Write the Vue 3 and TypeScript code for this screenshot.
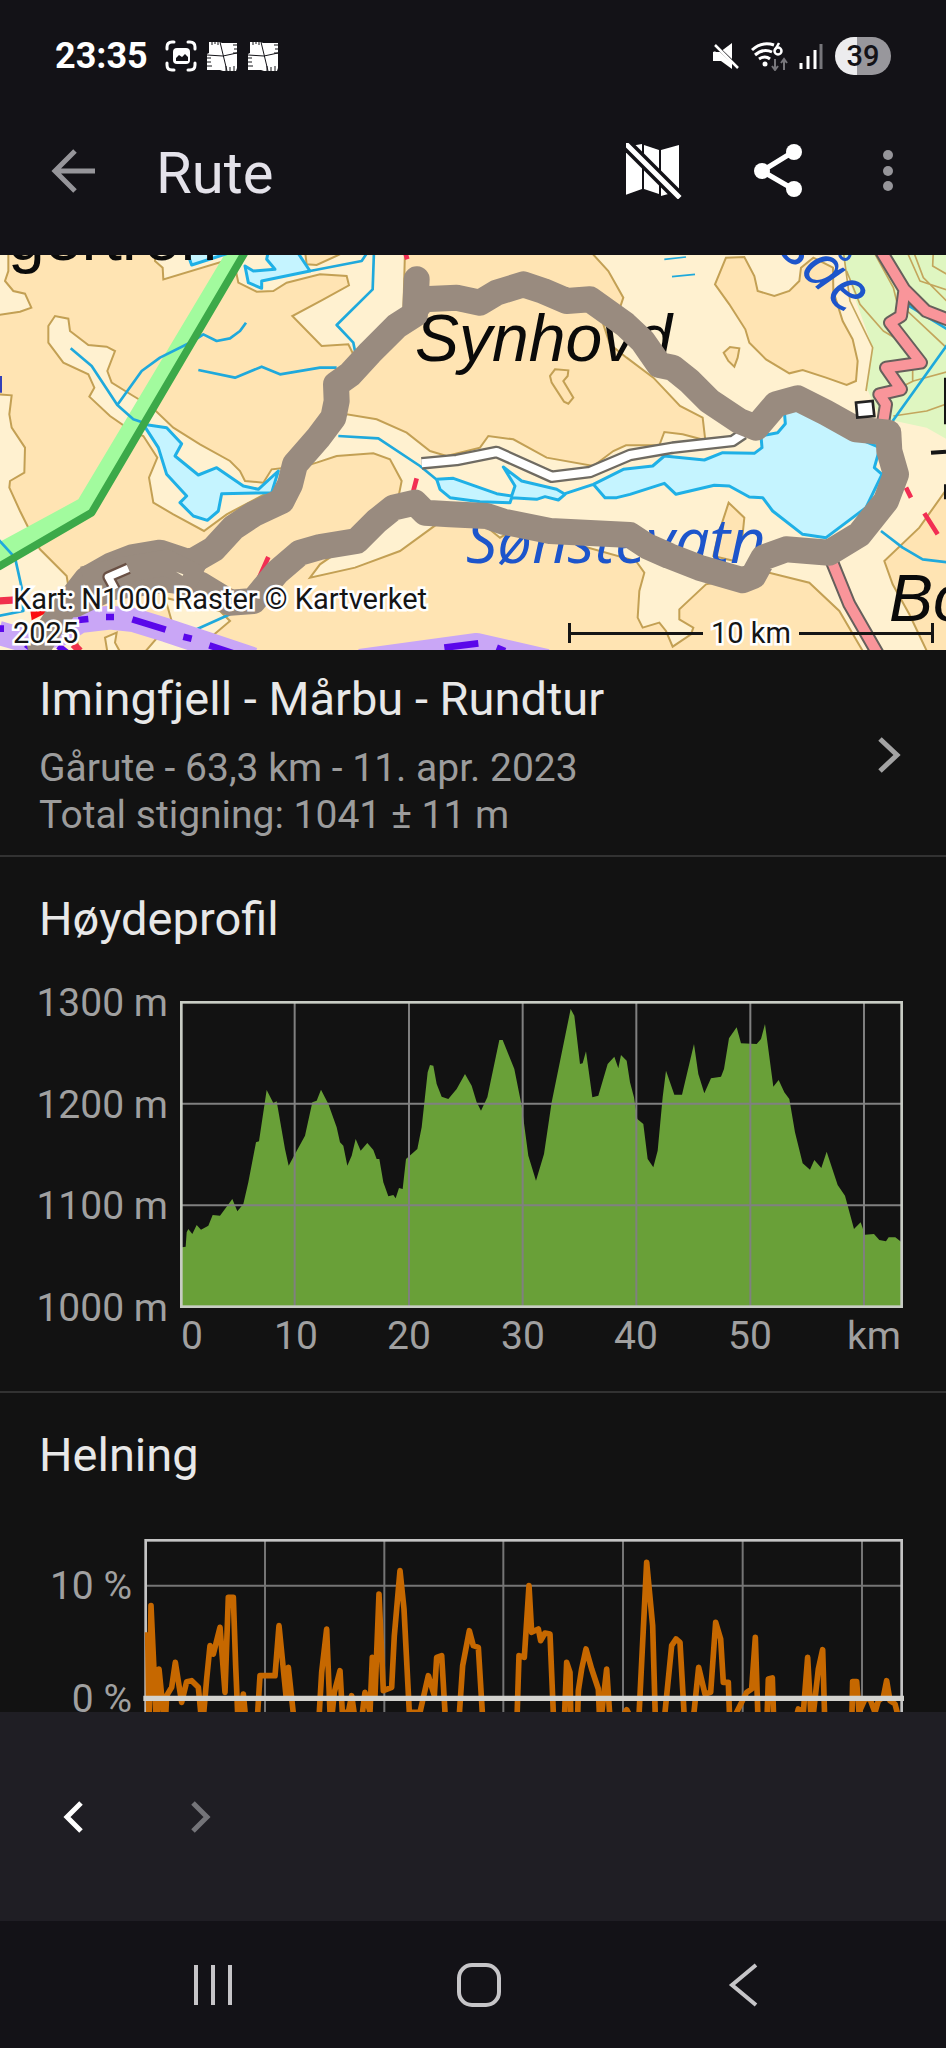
<script setup lang="ts">
interface Tick {
  pos: number
  label: string
}

// Chart drawings use three units for each pixel of the surrounding SVG.
const elevationGrid: number[] = [884, 1227, 1568, 1909, 2251, 2592]
const slopeGrid: number[] = [795, 1153, 1510, 1869, 2228, 2586]

const elevationLevels: Tick[] = [
  { pos: 47, label: '1300 m' },
  { pos: 149, label: '1200 m' },
  { pos: 250, label: '1100 m' },
  { pos: 352, label: '1000 m' },
]
const distances: Tick[] = [
  { pos: 192, label: '0' },
  { pos: 296, label: '10' },
  { pos: 409, label: '20' },
  { pos: 523, label: '30' },
  { pos: 636, label: '40' },
  { pos: 750, label: '50' },
]

const elevation =
  '546,835 557,833 560,790 565,780 577,795 590,768 603,782 625,770 638,738 660,740 697,690 712,727 730,705 745,640 768,520 777,517 800,363 820,402 830,397 855,540 866,590 885,555 915,500 937,400 950,395 963,362 985,405 1010,475 1020,520 1030,530 1042,590 1055,560 1067,510 1082,545 1102,522 1120,543 1130,570 1138,570 1150,640 1165,682 1180,678 1187,688 1197,657 1208,660 1218,570 1252,540 1265,475 1283,310 1290,288 1300,290 1310,345 1325,383 1345,390 1370,360 1395,315 1415,350 1430,400 1443,425 1462,385 1498,213 1508,213 1543,300 1565,410 1585,560 1608,635 1632,555 1655,400 1712,120 1723,140 1740,285 1748,283 1758,247 1777,385 1795,380 1823,285 1843,263 1855,298 1863,258 1880,275 1890,340 1902,385 1912,450 1930,465 1943,570 1960,595 1973,545 1988,385 1998,305 2023,377 2046,377 2082,225 2095,315 2113,373 2133,328 2163,323 2172,300 2187,208 2210,175 2223,223 2270,225 2283,210 2295,165 2320,353 2336,333 2353,370 2368,390 2385,490 2408,583 2430,602 2443,573 2464,597 2480,548 2513,648 2535,680 2562,780 2582,760 2595,797 2622,795 2638,813 2658,817 2666,805 2686,805 2705,820'

const slope =
  '443,760 447,1050 453,680 470,1050 477,870 495,1050 500,950 515,925 526,850 545,970 560,908 575,905 595,925 607,1050 620,900 630,800 640,825 660,745 675,940 685,655 700,655 707,860 715,1050 730,945 740,1050 770,1050 780,890 825,890 837,740 853,900 858,950 865,865 885,1050 955,1050 965,880 980,750 992,1050 1003,940 1020,875 1027,1000 1045,1000 1055,950 1065,1020 1085,1020 1095,940 1110,1000 1117,835 1125,950 1137,645 1150,935 1175,925 1183,770 1200,575 1212,690 1228,1000 1260,1000 1285,890 1303,950 1310,835 1325,830 1338,1050 1375,1050 1388,860 1408,755 1420,800 1435,805 1450,1050 1550,1050 1557,830 1573,835 1587,620 1595,760 1615,750 1622,785 1635,762 1650,765 1662,1050 1692,1050 1700,850 1710,880 1713,1050 1732,1050 1735,935 1745,870 1758,810 1775,870 1795,930 1800,1050 1820,870 1832,1050 1865,1020 1880,992 1895,1020 1915,1050 1940,550 1958,740 1967,1050 1995,1000 2015,800 2028,780 2040,790 2055,1050 2082,1000 2096,865 2115,945 2132,940 2147,730 2162,780 2170,910 2185,910 2190,1050 2205,1010 2240,940 2255,930 2266,775 2275,1050 2300,1050 2305,900 2317,897 2322,1050 2380,1050 2395,990 2410,1000 2423,835 2435,1050 2455,870 2468,812 2475,1050 2555,1050 2558,908 2570,908 2577,1000 2595,960 2610,960 2625,1000 2635,965 2650,955 2660,905 2670,965 2685,975 2697,1020'
</script>

<template>
  <div class="screen">
    <div class="status-bar">
      <div class="status-left">
        <span class="clock">23:35</span>
        <svg class="status-icon" viewBox="0 0 32 32" aria-hidden="true">
          <g fill="none" stroke="#fff" stroke-width="3" stroke-linecap="round">
            <path d="M2 9V7Q2 2 7 2H9M23 2h2q5 0 5 5v2M30 23v2q0 5-5 5h-2M9 30H7q-5 0-5-5v-2" />
          </g>
          <rect x="8" y="8" width="17" height="16" rx="4" fill="#fff" />
          <path d="M11 21v-3l3-3 3 2 3-3 3 3v4z" fill="#131217" />
        </svg>
        <svg v-for="n in 2" :key="n" class="status-icon" viewBox="0 0 32 32" aria-hidden="true">
          <path
            d="M3 2H15L16 3 31 3V28L30 31H17L14 30 1 30V14L3 13Z"
            fill="#fff"
          />
          <path
            d="M6 0v5M9 0v4M12 0v5M15 0v3M32 5h-5M32 9h-4M32 13h-5M0 18h5M0 22h5M0 26h6M20 32v-6M24 32v-5M28 32v-6"
            stroke="#131217"
            stroke-width="1"
          />
          <path d="M1 15 17 16 31 13M14 2 21 31" fill="none" stroke="#131217" stroke-width="1" />
        </svg>
      </div>
      <div class="status-right">
        <svg width="28" height="28" viewBox="0 0 28 28" aria-hidden="true">
          <path d="M1 10h7L20 1V20L16 15 7 8z" fill="#fff" />
          <path d="M2 4 26 27" stroke="#131217" stroke-width="6" />
          <path d="M1 10H8L20 21V27L9 19H1z" fill="#fff" />
          <path d="M3 3 26 26" stroke="#fff" stroke-width="2.5" />
        </svg>
        <svg width="39" height="30" viewBox="0 0 39 30" aria-hidden="true">
          <g fill="none" stroke="#fff" stroke-width="3">
            <path d="M2 9Q12 0 24 4M5 14Q13 7 22 11M9 18Q15 14 20 18" />
          </g>
          <circle cx="15" cy="23" r="2.5" fill="#fff" />
          <circle cx="28" cy="10" r="3.5" fill="none" stroke="#fff" stroke-width="2.5" />
          <path d="M25 9 29 2" stroke="#fff" stroke-width="2.5" />
          <path d="M25 18V28M22 25l3 4 3-4M34 29V18M31 22l3-4 3 4" fill="none" stroke="#77767b" stroke-width="2" />
        </svg>
        <svg width="24" height="28" viewBox="0 0 24 28" aria-hidden="true">
          <path d="M2 21v6M9 14v13M16 8v19" stroke="#fff" stroke-width="3" />
          <path d="M22 2v25" stroke="#77767b" stroke-width="3" />
        </svg>
        <span class="battery">39</span>
      </div>
    </div>

    <header class="app-bar">
      <button class="icon-button" type="button" aria-label="Tilbake">
        <svg width="48" height="48" viewBox="0 0 48 48">
          <path d="M45 24H5M25 4 5 24 25 44" fill="none" stroke="#96959a" stroke-width="5" />
        </svg>
      </button>
      <h1>Rute</h1>
      <div class="actions">
        <button class="icon-button" type="button" aria-label="Skjul kart">
          <svg width="56" height="56" viewBox="1 0 56 56">
            <path d="M0 4 17 1V46L0 52zM19 2 34 7V51L19 46zM36 7 54 2V48L36 53z" fill="#fff" />
            <path d="M1 1 53 53" stroke="#131217" stroke-width="12" />
            <path d="M1 1 53 53" stroke="#fff" stroke-width="5" stroke-linecap="square" />
          </svg>
        </button>
        <button class="icon-button" type="button" aria-label="Del">
          <svg width="56" height="56" viewBox="0 0 56 56">
            <path d="M47 9 16 28 47 46" fill="none" stroke="#fff" stroke-width="5" />
            <g fill="#fff">
              <circle cx="48" cy="9" r="8" />
              <circle cx="16" cy="28" r="8" />
              <circle cx="48" cy="46" r="8" />
            </g>
          </svg>
        </button>
        <button class="icon-button" type="button" aria-label="Flere valg">
          <svg width="44" height="48" viewBox="0 0 44 48">
            <g fill="#96959a">
              <circle cx="22" cy="8" r="5" />
              <circle cx="22" cy="24" r="5" />
              <circle cx="22" cy="39" r="5" />
            </g>
          </svg>
        </button>
      </div>
    </header>

    <main>
      <div class="map">
        <svg class="fluid" viewBox="0 4 946 395" role="img" aria-label="Kart over ruten">
          <g transform="scale(0.33333)">
            <rect y="0" width="2838" height="1200" fill="#ffe4b3" />
            <g class="contour light">
              <path d="M-9,0H25V60L15,90 40,120 75,128 94,170 60,182 -9,193Z" />
              <path d="M-9,430 35,433 28,490 35,530 75,590 73,665 30,690 28,710 60,780 100,860 120,895 200,975 240,1220H-9Z" />
              <path d="M145,225 165,195 205,203 210,240 265,282 320,287 345,300 322,360 335,395 400,435 455,468 520,530 600,580 690,630 720,660 735,690 790,695 815,655 860,650 850,700 680,790 612,840 520,790 460,755 447,680 472,620 430,555 400,543 330,495 268,437 283,410 265,370 190,335 145,275Z" />
              <path d="M465,0V30L488,50 490,85 700,22 715,95 770,122 820,120 860,95 960,70 1040,75 1047,103 965,148 877,195 965,285 1045,280 1060,310 1150,235 1210,180 1215,0Z" />
              <path d="M1770,0 1825,60 1870,140 1860,170 1810,220 1830,280 1880,320 1960,380 2040,465 2108,500 2116,568 2048,550 1993,543 1978,583 1878,583 1840,600 1780,645 1640,620 1540,565 1465,555 1440,590 1340,615 1290,600 1220,545 1130,505 1040,490 900,650 950,635 1010,615 1120,607 1170,625 1205,690 1195,740 1120,830 960,940 930,980 1065,950 1200,900 1310,820 1450,820 1500,860 1550,830 1908,930 1933,965 1918,1020 1913,1100 1928,1130 1978,1115 1998,1140 2018,1187 2073,1150 2080,1130 2038,1105 2038,1075 2118,1000 2308,965 2428,995 2518,1080 2600,1220H2900V0Z" />
              <path d="M495,1040 515,1110 420,1220H560L690,1110 660,1080Z" />
              <path d="M325,1220 315,1160 350,1145 345,1175 370,1220Z" />
            </g>
            <g class="contour dark">
              <path d="M2178,20 2145,100 2188,160 2236,235 2248,275 2298,325 2368,367 2408,357 2478,380 2540,402 2568,390 2573,330 2558,265 2528,210 2500,120 2499,50 2440,20 2403,50 2398,90 2368,120 2323,135 2273,120 2263,75 2233,18Z" />
              <path d="M2171,305 2190,288 2218,292 2213,320 2203,347 2185,330Z" />
              <path d="M2186,755 2233,800 2228,850 2203,930 2140,915 2155,850Z" />
              <path d="M2850,700 2758,830 2653,930 2678,1000 2728,1090 2790,1220H2850Z" />
              <path d="M915,0 920,40 950,42 1015,12 1040,0Z" />
              <path d="M1665,355 1705,358 1703,375 1690,390 1720,440 1705,458 1692,452 1655,395 1650,375Z" />
            </g>
            <path d="M2520,0 2568,150 2618,290 2600,410 2640,500 2780,530 2850,570V0Z" fill="#dff6c1" />
            <g class="line" fill="none" stroke="#c3a65c" stroke-width="5">
              <path d="M2530,0 2550,150 2618,290 2598,420M2540,60 2580,160 2650,240 2700,270M2620,0 2680,110 2690,150 2850,300M2740,0 2770,80 2840,150M2720,0 2760,90 2850,120M2800,0 2798,45 2850,75M2660,430 2740,390 2850,360M2680,495 2780,480 2850,455M2738,345V390" />
            </g>

            <path d="M680,0 235,745 -5,875V950L275,785 740,0Z" fill="#a2fb9e" />
            <g class="line" fill="none" stroke="#1fa9dc" stroke-width="8">
              <path d="M212,292 275,345 352,462 400,505 440,518M352,462 425,360 480,320 580,270 610,250 650,270 690,262 720,240 738,215M595,357 705,380 785,347 840,370 960,350H1010M-5,865 45,920 65,1010 70,1080 -5,1095M930,60 1085,30 1105,0M1122,0 1118,115 1010,222 1060,275 1065,300M1015,555 1135,562 1260,645 1315,690M590,1135 690,1090M130,1130 145,1220M2640,0 2688,100 2728,165 2850,240M2850,270 2678,510M2643,840 2708,890 2768,925 2850,935" />
              <path d="M1993,25 2058,18M2016,77 2085,70" stroke-width="5" />
            </g>
            <g class="lake">
              <path d="M430,520 500,530 545,578 525,615 595,672 650,650 730,705 775,715 835,660 815,725 665,728 655,780 622,808 580,795 540,755 560,735 500,670 475,590Z" />
              <path d="M735,45 760,60 825,55 800,25 805,0H890L930,60 785,90V112L745,95Z" />
              <path d="M560,0 575,42 690,5Z" />
              <path d="M1310,685 1360,682 1490,728 1535,735 1545,705 1510,648 1565,690 1670,715 1695,730 1675,747 1635,737 1610,745 1535,740 1530,755 1440,752 1350,740 1320,715Z" />
              <path d="M1695,728 1780,700 1870,655 1958,645 1993,615 2113,627 2168,605 2263,607 2286,590 2283,555 2333,545 2356,518 2353,480 2393,470 2498,530 2640,590 2623,650 2646,670 2598,770 2478,860 2408,850 2318,780 2288,740 2248,738 2188,705 2143,703 2028,730 1993,697 1890,730 1850,740 1815,740 1780,700" />
            </g>

            <path class="line" d="M740,-5 275,785 -5,948" fill="none" stroke="#3ca949" stroke-width="23" />
            <g class="line" fill="none">
              <path d="M1265,637 1370,627 1490,603 1655,677 1770,663 1890,612 2018,590 2198,570 2230,548" stroke="#6f6b62" stroke-width="38" />
              <path d="M1265,637 1370,627 1490,603 1655,677 1770,663 1890,612 2018,590 2198,570 2230,548" stroke="#fff" stroke-width="24" />
              <g stroke="#66605c" stroke-width="42">
                <path d="M2643,0 2713,115 2778,180 2850,208M2713,120 2703,195 2670,215 2763,335 2658,350 2703,415 2638,430 2658,460 2650,510M2495,930 2548,1060 2640,1220" />
              </g>
              <g stroke="#f9959a" stroke-width="30">
                <path d="M2643,0 2713,115 2778,180 2850,208M2713,120 2703,195 2670,215 2763,335 2658,350 2703,415 2638,430 2658,460 2650,510M2495,930 2548,1060 2640,1220" />
              </g>
            </g>
            <path class="line" d="M-5,1145 80,1170 180,1150 240,1110 330,1100 400,1107 500,1138 640,1185 760,1225M1080,1230 1430,1182 1640,1230" fill="none" stroke="#c9a6f6" stroke-width="72" />
            <path d="M-5,1133H12M235,1107 265,1104M318,1098H342M397,1105 497,1136M550,1157 575,1163M628,1183 715,1212M78,1180 105,1200M175,1185 200,1205M1333,1190 1435,1177M1490,1190 1515,1200" fill="none" stroke="#5a08ea" stroke-width="20" />
            <path d="M-5,1050 60,1046M220,1180 240,1200" stroke="#f0304c" stroke-width="22" />
            <path d="M90,1070 155,1078 95,1108Z" fill="#fb0d10" />
            <path d="M805,918 775,985M1250,682 1240,720M1214,0 1222,25M2718,710 2733,740M2773,787 2813,850" fill="none" stroke="#f22e53" stroke-width="14" />
            <path d="M2793,605 2838,602M2838,380V520M2838,700V745" stroke="#151515" stroke-width="12" />
            <path d="M-2,375V425" stroke="#3340b8" stroke-width="16" />
          </g>

          <g class="place">
            <text x="8" y="9">gertron</text>
            <text class="slanted" x="415" y="110">Synhovd</text>
            <text class="slanted" x="889" y="370">Bo</text>
          </g>
          <g class="water">
            <text x="466" y="312">Sønstevatn</text>
            <text transform="translate(779 2) rotate(43)">såe</text>
          </g>

          <g transform="scale(0.33333)">
            <g class="line" fill="none" stroke="#998b7f">
              <path
                stroke-width="78"
                stroke-linecap="round"
                d="M1250,85 1245,190 1190,225 1110,305 1050,370 1008,400 1010,450 1000,500 955,560 885,640 870,700 845,750 760,790 700,830 640,895 570,935 480,905 400,918 330,945 260,985 225,1030 170,1100 120,1180M225,1060 330,1010 500,985 600,1000 690,1055 760,1050 830,965 900,905 960,888 1070,870 1130,810 1180,770 1245,755 1275,785 1350,790 1460,795 1510,812 1650,840 1890,852 1940,885 2008,915 2098,950 2228,988 2260,975 2290,920 2358,895 2488,905 2578,850 2658,750 2688,670 2668,600 2665,545 2568,535 2478,485 2393,442 2328,460 2268,530 2218,510 2128,450 2068,390 2018,350 1978,342 1928,270 1875,220 1770,145 1700,150 1630,120 1570,100 1490,125 1440,155 1370,140 1270,145 1250,170"
              />
              <path stroke-width="78" d="M250,985 350,960 500,935 600,985" />
              <path d="M385,952 325,978 345,1015" stroke="#6a5145" stroke-width="36" />
              <path d="M385,952 325,978 345,1015" stroke="#fff" stroke-width="22" />
            </g>
            <path d="M528,962 550,970 548,975Z" fill="#fff1d0" />
            <path d="M2568,455 2618,450 2623,495 2572,500Z" fill="#fff" stroke="#222" stroke-width="8" />
          </g>
        </svg>
        <div class="map-overlay">
          <p class="attribution">Kart: N1000 Raster © Kartverket 2025</p>
          <div class="scale"><i></i><span>10 km</span><i></i></div>
        </div>
      </div>

      <a class="route" href="#rute">
        <div>
          <h2>Imingfjell - Mårbu - Rundtur</h2>
          <p>Gårute - 63,3 km - 11. apr. 2023</p>
          <p>Total stigning: 1041 ± 11 m</p>
        </div>
        <svg width="26" height="40" viewBox="0 0 26 40" aria-hidden="true">
          <path d="M4 4 21 20 4 36" fill="none" stroke="#a3a3a3" stroke-width="5" />
        </svg>
      </a>

      <section class="chart-section">
        <h2>Høydeprofil</h2>
        <svg class="fluid" viewBox="0 0 946 422" role="img" aria-label="Høydeprofil">
          <g transform="scale(0.33333)">
            <polygon :points="`546,1013 ${elevation} 2705,1013`" fill="#69a038" />
            <g stroke="#808080" stroke-width="6">
              <line v-for="x in elevationGrid" :key="x" :x1="x" :x2="x" y1="100" y2="1013" />
              <line x1="543" x2="2705" y1="404" y2="404" />
              <line x1="543" x2="2705" y1="709" y2="709" />
            </g>
            <rect x="544" y="100" width="2161" height="913" fill="none" stroke="#c8ccc4" stroke-width="8" />
          </g>
          <g class="axis">
            <text v-for="t in elevationLevels" :key="t.label" class="end" x="168" :y="t.pos">{{ t.label }}</text>
            <text v-for="t in distances" :key="t.label" class="middle" :x="t.pos" y="380">{{ t.label }}</text>
            <text class="end" x="901" y="380">km</text>
          </g>
        </svg>
      </section>

      <section class="chart-section">
        <h2>Helning</h2>
        <svg class="fluid" viewBox="0 126 946 400" role="img" aria-label="Helning">
          <g transform="scale(0.33333)">
            <g stroke="#757575" stroke-width="6">
              <line v-for="x in slopeGrid" :key="x" :x1="x" :x2="x" y1="484" y2="1200" />
              <line x1="437" x2="2705" y1="620" y2="620" />
            </g>
            <rect x="437" y="484" width="2268" height="900" fill="none" stroke="#c4c4c4" stroke-width="8" />
            <polyline class="line" :points="slope" fill="none" stroke="#c66800" stroke-width="17" />
            <line x1="430" x2="2712" y1="958" y2="958" stroke="#d2d2ce" stroke-width="16" />
          </g>
          <g class="axis">
            <text class="end" x="132" y="220">10 %</text>
            <text class="end" x="132" y="333">0 %</text>
          </g>
        </svg>
      </section>
    </main>

    <div class="pager">
      <button class="icon-button" type="button" aria-label="Forrige">
        <svg width="48" height="48" viewBox="0 0 48 48">
          <path d="M31 10 17 24 31 38" fill="none" stroke="#fff" stroke-width="5" />
        </svg>
      </button>
      <button class="icon-button" type="button" aria-label="Neste" disabled>
        <svg width="48" height="48" viewBox="0 0 48 48">
          <path d="M17 10 31 24 17 38" fill="none" stroke="#747479" stroke-width="5" />
        </svg>
      </button>
    </div>

    <nav class="system-nav" aria-label="System">
      <button class="icon-button" type="button" aria-label="Nylige apper">
        <svg width="48" height="48" viewBox="0 0 48 48">
          <path d="M7 4V44M24 4V44M41 4V44" stroke="#c6c5c8" stroke-width="4" />
        </svg>
      </button>
      <button class="icon-button" type="button" aria-label="Hjem">
        <svg width="48" height="48" viewBox="0 0 48 48">
          <rect x="4" y="4" width="40" height="40" rx="13" fill="none" stroke="#c6c5c8" stroke-width="4" />
        </svg>
      </button>
      <button class="icon-button" type="button" aria-label="Tilbake i systemet">
        <svg width="48" height="48" viewBox="0 0 48 48">
          <path d="M36 4 12 24 36 44" fill="none" stroke="#c6c5c8" stroke-width="4" />
        </svg>
      </button>
    </nav>
  </div>
</template>

<style>
body {
  background: #131217;
}
</style>

<style scoped>
.screen {
  display: flex;
  flex-direction: column;
  height: 100vh;
  background: #131217;
  color: #e8e8e8;
  font-family: Roboto, 'Liberation Sans', sans-serif;
}
.status-bar,
.app-bar,
.pager,
.system-nav {
  flex: none;
}
h1,
h2,
p {
  margin: 0;
  font-weight: 400;
}
svg {
  display: block;
}
.icon-button {
  padding: 0;
  border: 0;
  background: none;
}
.status-bar {
  display: flex;
  justify-content: space-between;
  align-items: center;
  height: 112px;
  padding: 0 55px;
  box-sizing: border-box;
}
.status-left {
  display: flex;
  align-items: center;
  gap: 9px;
}
.clock {
  margin-right: 8px;
  color: #fff;
  font-size: 36px;
  font-weight: 700;
}
.status-icon {
  width: 32px;
  height: 32px;
}
.status-right {
  display: flex;
  align-items: center;
  gap: 10px;
}
.battery {
  width: 56px;
  margin-left: 2px;
  border-radius: 19px;
  background: linear-gradient(90deg, #ececee 40%, #98979c 40%);
  color: #131217;
  font-size: 29px;
  font-weight: 500;
  line-height: 38px;
  text-align: center;
}
.app-bar {
  display: flex;
  align-items: center;
  height: 118px;
  padding: 0 36px 0 50px;
  margin-bottom: 25px;
}
h1 {
  padding-top: 4px;
  margin-left: 58px;
  color: #e4e2ea;
  font-size: 58px;
  line-height: 64px;
}
.actions {
  display: flex;
  align-items: center;
  gap: 64px;
  margin-left: auto;
}
main {
  flex: 1;
  min-height: 0;
  overflow: hidden;
  background: #121212;
}
.fluid {
  width: 100%;
  height: auto;
}
.map {
  position: relative;
}
.line {
  stroke-linejoin: round;
}
.contour {
  stroke: #c3a054;
  stroke-width: 6;
}
.light {
  fill: #fff1d0;
}
.dark {
  fill: #ffe4b3;
}
.lake {
  fill: #c5f4ff;
  stroke: #1fb0e6;
  stroke-width: 9;
  stroke-linejoin: round;
}
.place {
  fill: #0a0a0a;
  font: 66px 'Liberation Sans', Arial, sans-serif;
}
.slanted {
  font-style: italic;
}
.water {
  fill: #1d55cb;
  font: italic 62px 'Open Sans', 'Noto Sans', sans-serif;
}
.map-overlay {
  position: absolute;
  inset: auto 12px 0 13px;
  display: flex;
  justify-content: space-between;
  align-items: flex-end;
  color: #151515;
  font-size: 29px;
  line-height: 34px;
}
.map-overlay p,
.map-overlay span {
  -webkit-text-stroke: 5px #fff;
  paint-order: stroke fill;
}
.attribution {
  flex: 0 1 440px;
}
.scale {
  display: flex;
  align-items: center;
  flex: 0 1 366px;
  gap: 8px;
}
.scale i {
  flex: 1;
  height: 20px;
  background: linear-gradient(#151515, #151515) center / 100% 3px no-repeat;
}
.scale i:first-child {
  border-left: 3px solid #151515;
}
.scale i:last-child {
  border-right: 3px solid #151515;
}
.route {
  display: flex;
  justify-content: space-between;
  align-items: center;
  padding: 21px 44px 16px 39px;
  border-bottom: 2px solid #323232;
  color: inherit;
  text-decoration: none;
}
h2 {
  font-size: 47px;
  line-height: 56px;
}
.route h2 {
  margin-bottom: 18px;
}
.route p {
  color: #9c9c9c;
  font-size: 39px;
  line-height: 47px;
}
.chart-section {
  border-bottom: 2px solid #323232;
}
.chart-section h2 {
  padding: 34px 39px 22px;
}
.axis {
  fill: #a0a0a0;
  font-size: 39px;
}
.end {
  text-anchor: end;
}
.middle {
  text-anchor: middle;
}
.pager {
  display: flex;
  align-items: center;
  gap: 78px;
  height: 209px;
  padding: 0 50px;
  background: #1f1e24;
}
.system-nav {
  display: flex;
  align-items: center;
  justify-content: space-between;
  height: 127px;
  padding: 0 178px 0 189px;
}
</style>
